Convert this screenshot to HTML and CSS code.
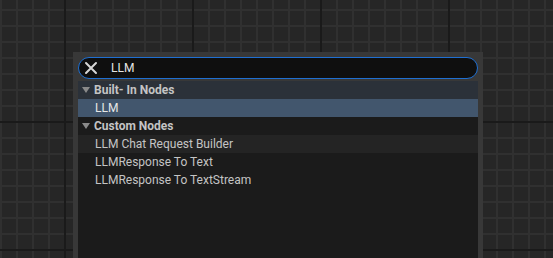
FILE: index.html
```html
<!DOCTYPE html>
<html lang="en">
<head>
    <meta charset="UTF-8">
    <meta name="viewport" content="width=device-width, initial-scale=1.0">
    <title>Node Search</title>
    <link rel="stylesheet" href="styles.css">
</head>
<body>
    <div class="graph">
        <!-- 节点搜索弹窗 -->
        <div class="popup">
            <div class="search-box">
                <svg class="clear-icon" width="14" height="14" viewBox="0 0 14 14">
                    <path d="M2 2 L12 12 M12 2 L2 12" stroke="#d6d6d6" stroke-width="2" stroke-linecap="round" fill="none"/>
                </svg>
                <span class="search-text">LLM</span>
            </div>
            <div class="node-list">
                <div class="category active">
                    <span class="arrow"></span>
                    <span>Built- In Nodes</span>
                </div>
                <div class="item selected">LLM</div>
                <div class="category">
                    <span class="arrow"></span>
                    <span>Custom Nodes</span>
                </div>
                <div class="item hover">LLM Chat Request Builder</div>
                <div class="item">LLMResponse To Text</div>
                <div class="item">LLMResponse To TextStream</div>
            </div>
        </div>
    </div>
</body>
</html>
```

FILE: styles.css
```css
/* 页面与网格背景 */
html, body {
    margin: 0;
    height: 100%;
    overflow: hidden;
}

body {
    font-family: Roboto, "Liberation Sans", sans-serif;
    background-color: #262626;
}

.graph {
    height: 100%;
    padding: 52px 0 0 73px;
    box-sizing: border-box;
    background-color: #262626;
    background-image:
        linear-gradient(to right, #1a1a1a 2px, transparent 2px),
        linear-gradient(to bottom, #1a1a1a 2px, transparent 2px),
        linear-gradient(to right, #303030 2px, transparent 2px),
        linear-gradient(to bottom, #303030 2px, transparent 2px);
    background-size: 128px 128px, 128px 128px, 16px 16px, 16px 16px;
    background-position: 64px 0, 0 121px, 0 0, 0 9px;
}

/* 弹窗外框 */
.popup {
    width: 410px;
    height: 206px;
    padding: 5px 5px 0;
    box-sizing: border-box;
    background-color: #383838;
    display: flex;
    flex-direction: column;
    gap: 2px;
}

/* 搜索框 */
.search-box {
    height: 22px;
    flex-shrink: 0;
    border: 1px solid #1f6fd1;
    border-radius: 11px;
    background-color: #0f0f0f;
    box-sizing: border-box;
    display: flex;
    align-items: center;
    padding-left: 5px;
}

.clear-icon {
    flex-shrink: 0;
}

.search-text {
    margin-left: 13px;
    font-size: 12px;
    color: #e4e4e4;
}

/* 节点列表 */
.node-list {
    flex: 1;
    background-color: #1b1b1b;
}

.category, .item {
    height: 18px;
    display: flex;
    align-items: center;
    font-size: 12px;
    color: #c4c4c4;
}

.category {
    padding-left: 4px;
    font-weight: bold;
}

.category.active {
    background-color: #2b3139;
}

.arrow {
    width: 0;
    height: 0;
    border-left: 4px solid transparent;
    border-right: 4px solid transparent;
    border-top: 6px solid #8a8a8a;
    margin-right: 4px;
}

.item {
    padding-left: 17px;
}

.item.selected {
    background-color: #42566d;
    color: #e6e6e6;
}

.item.hover {
    background-color: #242424;
}
```
